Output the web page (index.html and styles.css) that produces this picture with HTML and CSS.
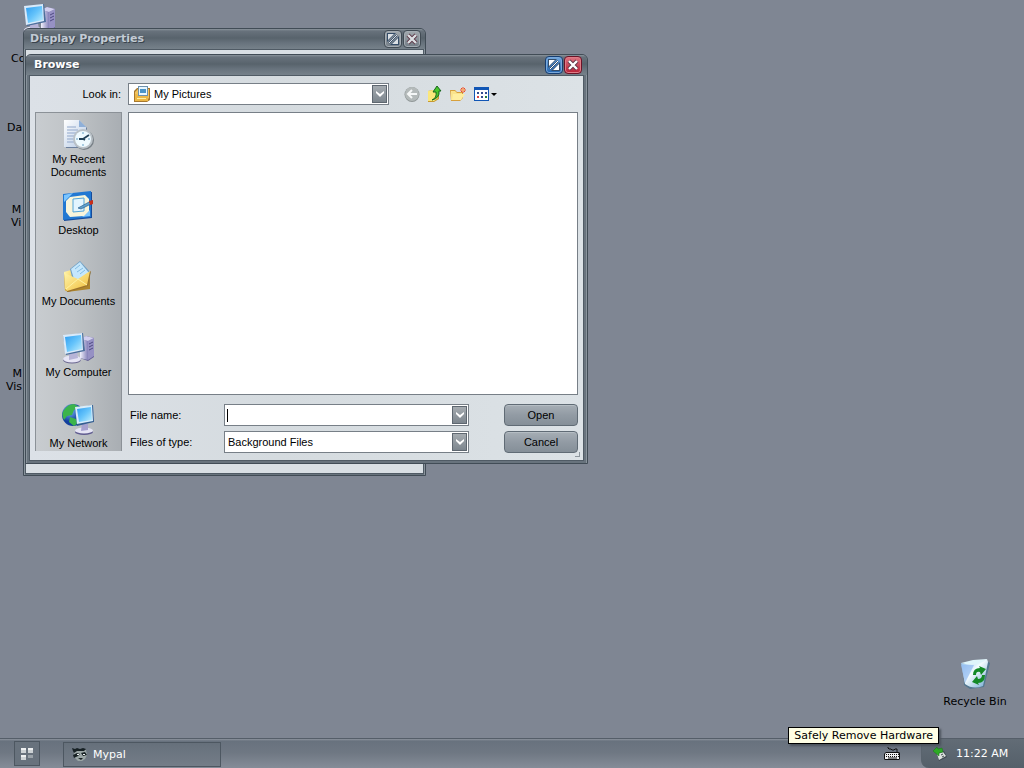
FILE: index.html
```html
<!DOCTYPE html>
<html lang="en">
<head>
<meta charset="utf-8">
<title>Browse</title>
<link rel="stylesheet" href="styles.css">
</head>
<body>
<svg class="defs" aria-hidden="true">
  <defs>
    <linearGradient id="screen" x1="0" y1="0" x2="1" y2="1"><stop offset="0" stop-color="#2f9df0"/><stop offset=".5" stop-color="#66c4fb"/><stop offset="1" stop-color="#c4f0fc"/></linearGradient>
    <linearGradient id="violet" x1="0" y1="0" x2="1" y2="0"><stop offset="0" stop-color="#f1f1fc"/><stop offset="1" stop-color="#8480b8"/></linearGradient>
    <linearGradient id="folder" x1="0" y1="0" x2="1" y2="1"><stop offset="0" stop-color="#fff6b0"/><stop offset="1" stop-color="#f0bd38"/></linearGradient>
    <linearGradient id="paper" x1="0" y1="0" x2="1" y2="1"><stop offset="0" stop-color="#fff"/><stop offset="1" stop-color="#b5c9e4"/></linearGradient>
    <linearGradient id="bin" x1="0" y1="0" x2="1" y2="1"><stop offset="0" stop-color="#7fb6ec"/><stop offset=".45" stop-color="#f4fcff"/><stop offset="1" stop-color="#6ba4cf"/></linearGradient>
    <radialGradient id="globe" cx=".35" cy=".3"><stop offset="0" stop-color="#7cb8ff"/><stop offset="1" stop-color="#123f9d"/></radialGradient>
    <symbol id="computer" viewBox="0 0 32 32">
      <path d="M18 8l6-4 8 2v19l-6 4-8-3z" fill="#615d93"/>
      <path d="M18 7l8 2v19l-8-2z" fill="url(#violet)"/><path d="M26 9l6-3v18l-6 4z" fill="#9691c4"/><path d="M18 7l6-3 8 2-6 3z" fill="#d2cfee"/>
      <path d="M27 12l4-2M27 15l4-2M27 18l4-2" stroke="#4f4a83"/>
      <ellipse cx="10" cy="28" rx="9" ry="3.500" fill="#68648f"/><ellipse cx="10" cy="27" rx="9" ry="3.500" fill="#e6e5f5"/>
      <path d="M7 21l8-1 1 6-9 2z" fill="#b7b4d7"/>
      <path d="M1 4l20-3 2 18-19 4z" fill="#4c6f9c"/><path d="M1 3l19-2 1 17-18 4z" fill="#d9eafa"/><path d="M3 5l16-2 1 14-15 3z" fill="url(#screen)"/>
    </symbol>
    <symbol id="recent" viewBox="0 0 32 32">
      <path d="M3 2h15l7 7v20H4z" fill="#6b7f9d"/><path d="M2 1h15l7 7v20H2z" fill="url(#paper)"/><path d="M17 1v7h7z" fill="#8eafd8"/>
      <path d="M5 8h9M5 11h11M5 14h9M5 17h8M5 20h6M5 23h8" stroke="#91a7ca"/>
      <circle cx="22" cy="21" r="10" fill="#777f86"/><circle cx="21" cy="20" r="10" fill="#b9c1c7"/><circle cx="21" cy="20" r="8" fill="#eefaff"/>
      <path d="M21 20l6-4M21 20h-4M21 20l2 1" stroke="#234257" stroke-width="1.800"/><path d="M21 13v2M21 25v2M14 20h2M26 20h2" stroke="#649fc4"/>
    </symbol>
    <symbol id="desk" viewBox="0 0 32 32">
      <path d="M2 5l28-3v26L2 31z" fill="#164b9a"/><path d="M1 4l28-3v26L1 30z" fill="#2278d2"/><path d="M2 5l9-2-9 9zM28 26l-8 1 8-7z" fill="#7bc5ff"/>
      <path d="M8 7l15-2 4 4v12l-5 5-14 1-4-5V11z" fill="#f8f5dc"/><path d="M11 9l11-1v13l-11 1z" fill="#e2f5ff" stroke="#55a5d8"/>
      <path d="M16 18l11-6 2 2-10 5z" fill="#5fa0cc" stroke="#195181" stroke-width=".6"/><path d="M27 11l4-1v4l-3 1z" fill="#c92e18"/>
    </symbol>
    <symbol id="documents" viewBox="0 0 32 32">
      <path d="M3 12l7-3 4 3 14-1v17L5 31z" fill="#ad842c"/><path d="M2 11l7-2 3 3v17l-9 1z" fill="url(#folder)"/>
      <path d="M8 8L18 0l11 12-7 9-11-1z" fill="#71a0c5"/><path d="M9 8L18 1l9 11-7 8-8-2z" fill="#c5e7fc"/><path d="M13 8l5-4M15 11l6-4M18 13l5-4" stroke="#82bbe2"/>
      <path d="M2 13l14 6 13-9-3 15-20 6-3-2z" fill="#9c732c"/><path d="M2 12l14 6 12-8-3 14-20 6-2-2z" fill="url(#folder)"/><path d="M4 28l12-10 9 6" fill="none" stroke="#fff3a3"/>
    </symbol>
    <symbol id="network" viewBox="0 0 32 32">
      <circle cx="11" cy="12" r="11" fill="url(#globe)"/><path d="M2 7q4-6 10-6l5 3-5 3-2 5-5 1-3 4Q-1 11 2 7zM8 14l6 2 2 4-4 3-5-4z" fill="#3cb44b"/>
      <ellipse cx="22" cy="29" rx="9" ry="3" fill="#5f5b8f"/><ellipse cx="22" cy="27.500" rx="9" ry="3" fill="#e5e4f4"/><path d="M20 20l6 1v6l-7 1z" fill="#a6a1cf"/>
      <path d="M13 5l18-3 1 17-17 4z" fill="#335e91"/><path d="M13 4l17-2 1 16-16 3z" fill="#d8edfb"/><path d="M15 6l14-2 1 13-13 2z" fill="url(#screen)"/>
    </symbol>
    <symbol id="recycle" viewBox="0 0 32 32">
      <path d="M4 7l22-5 5 3-6 24-14 2-6-4z" fill="#53768f"/><path d="M2 5q11 2 26-4l1 3-5 24q-10 4-18-2z" fill="url(#bin)"/>
      <path d="M2 5l12-3 14-1q-10 9-26 4z" fill="#dff5fb"/><path d="M2 7l4 18 9-18z" fill="#91baf1" opacity=".7"/>
      <path d="M14 17q0-7 7-7l-1-2 7 3-5 6-1-3q-4-1-4 3zM26 17q0 8-7 8l1 2-7-3 5-6 1 3q4 0 4-4z" fill="#138927"/>
    </symbol>
    <symbol id="resize" viewBox="0 0 12 12"><path d="M0 0h9L0 9zM12 3v9H3z" fill="#354d69"/><path d="M1 1h6L1 7zM11 5v6H5z" fill="currentColor"/><path d="M2 10l8-8" stroke="#354d69" stroke-width="2"/><path d="M2 10l8-8" stroke="currentColor"/></symbol>
    <symbol id="close" viewBox="0 0 12 12"><path d="M2 2l8 8M10 2l-8 8" stroke="#5b3544" stroke-width="4"/><path d="M2 2l8 8M10 2l-8 8" stroke="currentColor" stroke-width="2.400"/></symbol>
    <symbol id="chevron" viewBox="0 0 12 12"><path d="M2 3v2l4 4 4-4V3L6 6z" fill="#fff"/></symbol>
  </defs>
</svg>

<main class="desktop">
  <div class="shortcut computer"><svg class="icon"><use href="#computer"/></svg></div>
  <span class="shortcut label-a">Co</span>
  <span class="shortcut label-b">Da</span>
  <span class="shortcut label-c">M<br>Vi</span>
  <span class="shortcut label-d">M<br>Vis</span>
  <div class="shortcut bin"><svg class="icon"><use href="#recycle"/></svg><span>Recycle Bin</span></div>

  <section class="window inactive">
    <header class="titlebar"><h2>Display Properties</h2>
      <button class="caption" aria-label="Resize"><svg><use href="#resize"/></svg></button>
      <button class="caption" aria-label="Close"><svg><use href="#close"/></svg></button>
    </header>
    <div class="client"></div>
  </section>

  <section class="window active">
    <header class="titlebar"><h1>Browse</h1>
      <button class="caption blue" aria-label="Resize"><svg><use href="#resize"/></svg></button>
      <button class="caption red" aria-label="Close"><svg><use href="#close"/></svg></button>
    </header>
    <div class="client dialog">
      <label class="lookin" for="lookin">Look in:</label>
      <div class="toolbar">
        <div class="combo folder">
          <svg class="small" viewBox="0 0 16 16"><path d="M0 5l3-3h13v12l-3 2H0z" fill="#a7782e"/><path d="M1 6l3-3h11v9l-3 3H1z" fill="#f1c35e"/><path d="M4 0h10v10H4z" fill="#6e92ae"/><path d="M5 1h8v8H5z" fill="#e9f7ff"/><path d="M6 3h6v4H6z" fill="#4a94c8"/><path d="M1 8h2l1 2h10v5H1z" fill="#ecb746"/><path d="M3 12h9v1H3z" fill="#fff0a0"/></svg>
          <select id="lookin"><option>My Pictures</option></select>
          <span class="arrow"><svg><use href="#chevron"/></svg></span>
        </div>
        <div class="tools">
          <button class="tool" aria-label="Back"><svg viewBox="0 0 16 16"><circle cx="8" cy="8.500" r="7.500" fill="#8f9696"/><circle cx="8" cy="8" r="7" fill="#b4baba"/><path d="M8 4L4 8l4 4M4 8h9" fill="none" stroke="#f5f7f7" stroke-width="2"/></svg></button>
          <button class="tool" aria-label="Up one level"><svg viewBox="0 0 16 16"><path d="M1 5l5-1 2 2h4v7l-5 3H1z" fill="#c89a30"/><path d="M1 5l5-1 1 2h4v6l-4 3H1z" fill="#fbe77b"/><path d="M5 14q5-2 4-8H6l4-6 4 5h-2q1 7-7 9z" fill="#4ac52c" stroke="#17661c"/></svg></button>
          <button class="tool" aria-label="New folder"><svg viewBox="0 0 16 16"><path d="M0 4h5l2 2h6v6l-3 3H1z" fill="#d7a03c"/><path d="M1 5h4l2 2h5v3l-2 4H1z" fill="#fae38c"/><path d="M3 8h12l-4 6H2z" fill="#ffeea0"/><path d="M13 1v6M10 4h6M11 2l4 4M15 2l-4 4" stroke="#f04f22"/><circle cx="13" cy="4" r="1" fill="#ffd173"/></svg></button>
          <button class="tool views" aria-label="Views"><svg viewBox="0 0 24 16"><path d="M1 1h15v14H1z" fill="#1156b5"/><path d="M2 4h13v10H2z" fill="#fff"/><path d="M4 6h2v2H4zM8 6h2v2H8zM12 6h2v2h-2zM8 10h2v2H8z" fill="#334d90"/><path d="M4 10h2v2H4z" fill="#d94545"/><path d="M12 10h2v2h-2z" fill="#29823a"/><path d="M18 7h6l-3 3z" fill="#000"/></svg></button>
        </div>
      </div>
      <nav class="places">
        <button class="place"><svg class="icon"><use href="#recent"/></svg>My Recent<br>Documents</button>
        <button class="place"><svg class="icon"><use href="#desk"/></svg>Desktop</button>
        <button class="place"><svg class="icon"><use href="#documents"/></svg>My Documents</button>
        <button class="place"><svg class="icon"><use href="#computer"/></svg>My Computer</button>
        <button class="place"><svg class="icon"><use href="#network"/></svg>My Network</button>
      </nav>
      <div class="files"></div>
      <form class="fields">
        <label for="name">File name:</label>
        <div class="combo"><span class="caret"></span><input id="name" type="text"><span class="arrow"><svg><use href="#chevron"/></svg></span></div>
        <button class="push" type="button">Open</button>
        <label for="type">Files of type:</label>
        <div class="combo"><select id="type"><option>Background Files</option></select><span class="arrow"><svg><use href="#chevron"/></svg></span></div>
        <button class="push" type="button">Cancel</button>
      </form>
      <span class="grip"></span>
    </div>
  </section>
</main>

<footer class="taskbar">
  <button class="start" aria-label="Start"><svg viewBox="0 0 14 14"><path d="M1 1h5v5H1zM8 1h5v5H8zM1 8h5v5H1z" fill="#cdd2d5"/><path d="M1 1h5v2H1zM8 1h5v2H8zM1 8h5v2H1z" fill="#eef0f1"/><path d="M8 8h5v3H8z" fill="#9aa2a9"/></svg></button>
  <button class="task"><svg viewBox="0 0 16 14"><path d="M2 3l5-1 7 1 1 5-2 4-3 2H6l-4-4z" fill="#9aa5a5"/><path d="M0 1l3 1 2-1 3 1 3-1 3 1-2 2H5L2 6l-1-2zM1 8l4-2 3 1-2 2-4 2zM9 6l4-1 2 3-4 1zM6 11h5l-2 2z" fill="#172124"/><path d="M5 7h2v1H5zM11 7h2v1h-2z" fill="#f0f5f5"/></svg>Mypal</button>
  <svg class="keyboard" viewBox="0 0 18 14"><path d="M4 0v1l1 1h2l1 1h2l1-1h2v3" fill="none" stroke="#111"/><path d="M2 5h13l1 1v6l-1 1H1l-1-1V7z" fill="#111"/><path d="M2 6h12l1 1v5H1V7z" fill="#f1f1f1"/><path d="M2 7.500h13M2 9.500h13" stroke="#111" stroke-dasharray="1 1"/><path d="M4 11h9" stroke="#111"/></svg>
  <div class="tray">
    <svg class="device" viewBox="0 0 14 14"><path d="M4 7l7-3 3 6-8 4z" fill="#3f4950"/><path d="M4 7l6-2 3 4-7 4z" fill="#dce2de"/><path d="M8 8l2-1M9 10l2-1" stroke="#404b50"/><path d="M0 4l4-4 1 2 4-1 1 4-4 1v3z" fill="#2daa25" stroke="#197419" stroke-width=".5"/></svg>
    <time>11:22 AM</time>
  </div>
  <div class="tooltip" role="tooltip">Safely Remove Hardware</div>
</footer>
</body>
</html>
```
FILE: styles.css
```css
* { box-sizing: border-box; }
body {
  margin: 0;
  min-height: 100vh;
  display: flex;
  flex-direction: column;
  background: #7f8693;
  color: #000;
  font: 11px/13px "DejaVu Sans", sans-serif;
  overflow: hidden;
}
button, input, select { font: inherit; color: inherit; padding: 0; margin: 0; border: 0; background: none; }
svg { display: block; flex: none; }
.defs { position: absolute; width: 0; height: 0; }
.desktop { position: relative; flex: 1; }
.icon { width: 32px; height: 32px; }

.shortcut { position: absolute; }
.computer { left: 23px; top: 3px; }
.label-a { left: 11px; top: 52px; }
.label-b { left: 7px; top: 121px; }
.label-c { left: 11px; top: 203px; text-align: right; }
.label-d { left: 6px; top: 367px; text-align: right; }
.bin {
  right: 10px;
  bottom: 30px;
  width: 78px;
  display: flex;
  flex-direction: column;
  align-items: center;
  gap: 5px;
  white-space: nowrap;
}

.window {
  position: absolute;
  padding: 0 3px 2px;
  border: 1px solid #414c56;
  border-radius: 6px 6px 0 0;
  background: #68737d;
  box-shadow: inset 1px 0 #89939c, inset -1px 0 #89939c;
}
.inactive { left: 23px; top: 28px; width: 403px; padding: 0 1px 1px; }
.inactive .client { height: 425px; }
.active { left: 25px; top: 54px; width: 563px; }
.titlebar {
  height: 20px;
  margin: 0 -3px;
  padding: 0 5px 0 8px;
  display: flex;
  align-items: center;
  gap: 1px;
  border-radius: 5px 5px 0 0;
  background: linear-gradient(#8b949c 0, #68727c 2px, #58636c 9px, #68737d 14px, #76818a);
}
.inactive .titlebar { margin: 0 -1px; padding: 0 4px 0 6px; }
.titlebar h1, .titlebar h2 {
  flex: 1;
  margin: 0;
  font: bold 11px/14px "DejaVu Sans", sans-serif;
  color: #fff;
  text-shadow: 1px 1px #39434c;
}
.titlebar h2 { color: #c3cbd4; }
.caption {
  width: 18px;
  height: 18px;
  display: grid;
  place-items: center;
  border: 1px solid #414b54;
  border-radius: 4px;
  background: linear-gradient(#a2a9ae, #737d86);
  box-shadow: inset 0 0 0 1px #a4acb3;
  color: #dce0e4;
}
.caption svg { width: 12px; height: 12px; }
.blue { border-color: #173e71; background: linear-gradient(#73a8df, #2465ae); box-shadow: inset 0 0 0 1px #79a8da; color: #fff; }
.red { border-color: #6b1428; background: linear-gradient(#de7582, #b71f35); box-shadow: inset 0 0 0 1px #df7c87; color: #fff; }
.client { background: #d9dfe4; border: 1px solid #505b65; }

.dialog {
  display: grid;
  grid-template-columns: 87px 1fr;
  grid-template-rows: 22px 283px 1fr;
  gap: 7px 6px;
  padding: 7px 5px;
  font-family: "Liberation Sans", sans-serif;
  position: relative;
  background: linear-gradient(90deg, #dce1e7, #d5dbdf 45%, #dce2e6);
}
.lookin { align-self: center; justify-self: end; padding-right: 1px; }
.toolbar { display: flex; align-items: center; gap: 15px; }
.combo {
  height: 22px;
  display: flex;
  align-items: center;
  padding: 1px;
  border: 1px solid #777f87;
  background: #fff;
}
.folder { width: 261px; padding-left: 5px; }
.small { width: 16px; height: 16px; }
.combo select, .combo input { flex: 1; min-width: 0; height: 18px; padding: 0 2px; appearance: none; outline: none; }
.folder select { padding-left: 4px; }
.arrow {
  width: 15px;
  height: 18px;
  display: grid;
  place-items: center;
  border: 1px solid #5e6770;
  background: linear-gradient(#a5abb0, #7d868e);
}
.arrow svg { width: 12px; height: 12px; }
.caret { width: 1px; height: 13px; margin-left: 1px; background: #000; }
.tools { display: flex; gap: 7px; }
.tool svg { width: 16px; height: 16px; }
.views svg { width: 24px; }
.places {
  grid-row: 2 / 4;
  height: 339px;
  display: flex;
  flex-direction: column;
  border: 1px solid #8b9197;
  border-bottom: 0;
  background: linear-gradient(90deg, #c8ccd0, #bfc3c6 45%, #a9aeb3);
  overflow: hidden;
}
.place {
  flex: none;
  height: 71px;
  padding-top: 6px;
  display: flex;
  flex-direction: column;
  align-items: center;
  line-height: 13px;
}
.place .icon { margin: 0 2px 2px 0; }
.files { border: 1px solid #777f87; background: #fff; }
.fields {
  display: grid;
  grid-template-columns: 94px 245px 1fr;
  align-content: start;
  align-items: center;
  gap: 5px 0;
  padding: 2px 0 0 2px;
}
.push {
  width: 74px;
  height: 22px;
  justify-self: end;
  border: 1px solid #606b75;
  border-radius: 4px;
  background: linear-gradient(#a6aeb5, #929ba4 50%, #858f98);
  box-shadow: inset 0 1px #b5bdc3;
}
.grip { position: absolute; right: 3px; bottom: 3px; width: 5px; height: 5px; border: solid #8d969d; border-width: 0 1px 1px 0; }

.taskbar {
  position: relative;
  height: 30px;
  display: flex;
  align-items: center;
  border-top: 1px solid #555e69;
  background: linear-gradient(#8d949e 0, #68727e 2px, #6f7883 14px, #858c98);
  color: #fff;
}
.start {
  width: 26px;
  height: 25px;
  margin-left: 14px;
  display: grid;
  place-items: center;
  border: 1px solid #4d5761;
  background: #68727d;
}
.start svg { width: 14px; height: 14px; }
.task {
  width: 158px;
  height: 25px;
  margin: 1px auto 0 23px;
  padding-left: 8px;
  display: flex;
  align-items: center;
  gap: 5px;
  border: 1px solid #4d5761;
  background: linear-gradient(#66707b, #747d88);
}
.task svg { width: 16px; height: 14px; }
.keyboard { width: 18px; height: 14px; margin-right: 19px; }
.tray {
  align-self: stretch;
  width: 103px;
  display: flex;
  align-items: center;
  gap: 9px;
  padding-left: 11px;
  border-left: 1px solid #59636d;
  border-radius: 0 0 0 8px;
  background: linear-gradient(#626c76, #55606a);
}
.device { width: 14px; height: 14px; }
.tray time { white-space: nowrap; }
.tooltip {
  position: absolute;
  right: 85px;
  bottom: 24px;
  padding: 1px 5px;
  border: 1px solid #000;
  background: #ffffe5;
  color: #000;
  white-space: nowrap;
  box-shadow: 2px 2px 2px #4b535c;
}
```
